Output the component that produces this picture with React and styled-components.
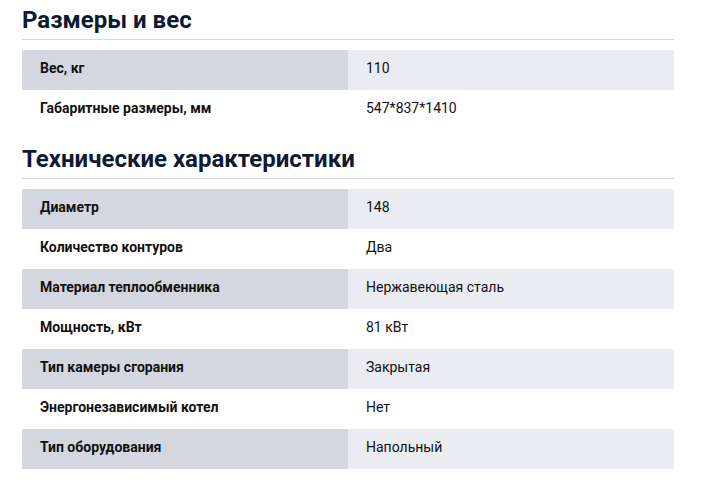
import styled, { createGlobalStyle } from 'styled-components';

const Global = createGlobalStyle`
  body {
    margin: 0;
    background: #fff;
    font-family: Roboto, 'Liberation Sans', Arial, sans-serif;
  }
`

const Page = styled.div`
  width: 652px;
  padding: 0 22px;
`

const Title = styled.h2`
  margin: 0;
  padding-top: 6px;
  padding-bottom: 5px;
  font-size: 24px;
  line-height: 28px;
  font-weight: 700;
  color: #0e1a33;
  border-bottom: 1px solid #d7d8df;
`

const Section = styled.section`
  margin-bottom: ${p => p.$gap || 0}px;
`

const Table = styled.div`
  margin-top: 10px;
  display: flex;
  flex-direction: column;
`

const Row = styled.div`
  display: grid;
  grid-template-columns: 1fr 1fr;
  height: 40px;
`

const Label = styled.div`
  padding: 8px 18px;
  font-size: 14px;
  line-height: 20px;
  font-weight: 700;
  color: #111;
  background: ${p => (p.$shade ? '#d4d6e0' : '#fff')};
`

const Value = styled.div`
  padding: 8px 18px;
  font-size: 14px;
  line-height: 20px;
  color: #111;
  background: ${p => (p.$shade ? '#ebecf1' : '#fff')};
`

const sections = [
  {
    title: 'Размеры и вес',
    rows: [
      ['Вес, кг', '110'],
      ['Габаритные размеры, мм', '547*837*1410'],
    ],
  },
  {
    title: 'Технические характеристики',
    rows: [
      ['Диаметр', '148'],
      ['Количество контуров', 'Два'],
      ['Материал теплообменника', 'Нержавеющая сталь'],
      ['Мощность, кВт', '81 кВт'],
      ['Тип камеры сгорания', 'Закрытая'],
      ['Энергонезависимый котел', 'Нет'],
      ['Тип оборудования', 'Напольный'],
    ],
  },
]

export default function App() {
  return (
    <>
      <Global />
      <Page>
        {sections.map((s, i) => (
          <Section key={s.title} $gap={i === 0 ? 9 : 0}>
            <Title>{s.title}</Title>
            <Table>
              {s.rows.map(([k, v], j) => (
                <Row key={k}>
                  <Label $shade={j % 2 === 0}>{k}</Label>
                  <Value $shade={j % 2 === 0}>{v}</Value>
                </Row>
              ))}
            </Table>
          </Section>
        ))}
      </Page>
    </>
  )
}
